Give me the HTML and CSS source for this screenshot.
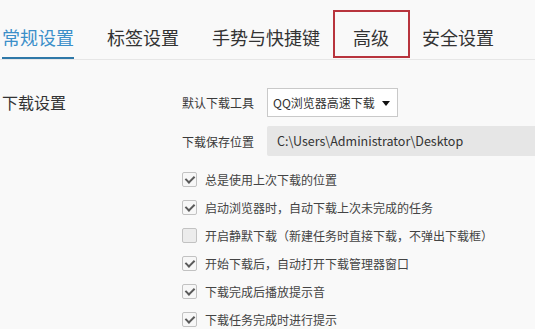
FILE: index.html
```html
<!DOCTYPE html>
<html>
<head>
	<meta charset="utf-8">
	<title>设置</title>
	<link rel="stylesheet" href="styles.css">
</head>
<body>
	<div id="settings">
		<ul class="tabs">
			<li class="active">常规设置</li>
			<li>标签设置</li>
			<li>手势与快捷键</li>
			<li class="marked">高级</li>
			<li>安全设置</li>
		</ul>
		<div class="section">
			<h3 class="title">下载设置</h3>
			<div class="form">
				<div class="row">
					<span class="label">默认下载工具</span>
					<div class="select">QQ浏览器高速下载<i class="arrow"></i></div>
				</div>
				<div class="row">
					<span class="label">下载保存位置</span>
					<div class="path">C:\Users\Administrator\Desktop</div>
				</div>
				<ul class="checks">
					<li><i class="box checked"></i>总是使用上次下载的位置</li>
					<li><i class="box checked"></i>启动浏览器时，自动下载上次未完成的任务</li>
					<li><i class="box"></i>开启静默下载（新建任务时直接下载，不弹出下载框）</li>
					<li><i class="box checked"></i>开始下载后，自动打开下载管理器窗口</li>
					<li><i class="box checked"></i>下载完成后播放提示音</li>
					<li><i class="box checked"></i>下载任务完成时进行提示</li>
				</ul>
			</div>
		</div>
	</div>
</body>
</html>
```
FILE: styles.css
```css
* {
	margin: 0;
	padding: 0;
	box-sizing: border-box;
}
html, body {
	background: #f9f9f9;
	overflow: hidden;
}
body {
	font-family: "Noto Sans CJK SC", "Noto Sans", sans-serif;
	color: #333;
}
#settings {
	width: 535px;
	height: 329px;
}

/* 顶部标签 */
.tabs {
	display: flex;
	gap: 33px;
	height: 60px;
	padding-left: 2px;
	list-style: none;
	border-bottom: 1px solid #e6e6e6;
}
.tabs li {
	position: relative;
	padding-top: 25px;
	height: 59px;
	line-height: 24px;
	font-size: 18px;
	color: #333;
	border-bottom: 2px solid transparent;
}
.tabs li.active {
	color: #3b8fc9;
	border-bottom-color: #2e78a8;
}
.tabs li.marked::after {
	content: "";
	position: absolute;
	top: 10px;
	bottom: -1px;
	left: -20px;
	right: -21px;
	border: 2px solid #b8343d;
}

/* 下载设置 */
.section {
	display: flex;
	padding: 28px 0 0 2px;
}
.section .title {
	width: 180px;
	height: 29px;
	line-height: 29px;
	font-size: 16px;
	font-weight: normal;
	color: #333;
}
.form {
	flex: 1;
}
.row {
	display: flex;
	align-items: center;
	margin-bottom: 9px;
}
.row .label {
	width: 85px;
	font-size: 12px;
	color: #3a3a3a;
}
.select {
	position: relative;
	width: 131px;
	height: 29px;
	line-height: 27px;
	padding-left: 5px;
	font-size: 12px;
	color: #333;
	background: #fff;
	border: 1px solid #c9c9c9;
}
.select .arrow {
	position: absolute;
	right: 7px;
	top: 12px;
	border: 4px solid transparent;
	border-top: 5px solid #111;
	border-bottom: 0;
}
.path {
	flex: 1;
	height: 30px;
	line-height: 30px;
	padding-left: 10px;
	font-size: 12.5px;
	color: #333;
	background: #e6e6e6;
	border-radius: 2px 0 0 2px;
}

/* 复选项 */
.checks {
	list-style: none;
}
.checks li {
	display: flex;
	align-items: center;
	height: 28px;
	font-size: 12px;
	color: #444;
}
.checks .box {
	position: relative;
	width: 15px;
	height: 15px;
	margin-right: 8px;
	background: #ececec;
	border: 1px solid #c2c2c2;
	border-radius: 2px;
}
.checks .box.checked {
	background: #f7f7f7;
}
.checks .box.checked::after {
	content: "";
	position: absolute;
	left: 4px;
	top: 1px;
	width: 4px;
	height: 7px;
	border-right: 2px solid #5a5a5a;
	border-bottom: 2px solid #5a5a5a;
	transform: rotate(45deg);
}
```
